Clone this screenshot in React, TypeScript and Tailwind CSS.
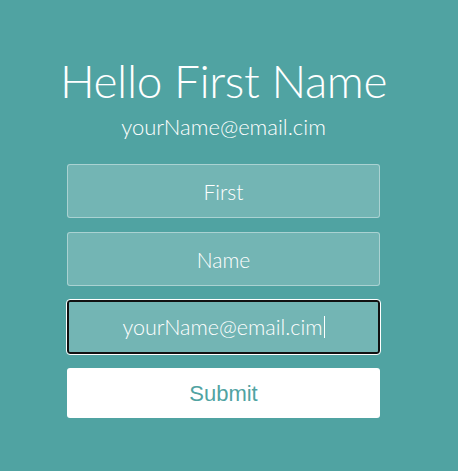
export default function App() {
  return (
    <div className="min-h-[471px] w-full bg-[#50a3a2] font-['Lato','Open_Sans',sans-serif] text-white">
      <div className="flex w-[447px] flex-col items-center pt-[53px]">
        <h1 className="text-[46px] font-light leading-[56px] tracking-[-0.4px]">Hello First Name</h1>
        <p className="mt-[4px] text-[22px] font-light leading-[28px]">yourName@email.cim</p>
        <form className="mt-[23px] flex w-[313px] flex-col gap-[14px]">
          <input
            className="h-[54px] w-full rounded-[3px] border border-white/40 bg-white/20 text-center text-[21px] font-light text-white placeholder:text-white outline-none"
            placeholder="First"
            readOnly
          />
          <input
            className="h-[54px] w-full rounded-[3px] border border-white/40 bg-white/20 text-center text-[21px] font-light text-white placeholder:text-white outline-none"
            placeholder="Name"
            readOnly
          />
          <div className="flex h-[54px] w-full items-center justify-center rounded-[3px] border-2 border-[#111] bg-white/20 text-[21.5px] font-light outline outline-1 outline-white">
            <span>yourName@email.cim</span>
            <span className="ml-[1px] h-[22px] w-px bg-white" />
          </div>
          <button
            type="button"
            className="h-[50px] w-full rounded-[3px] bg-white font-['Liberation_Sans',Arial,sans-serif] text-[22px] text-[#50a3a2]"
          >
            Submit
          </button>
        </form>
      </div>
    </div>
  );
}
